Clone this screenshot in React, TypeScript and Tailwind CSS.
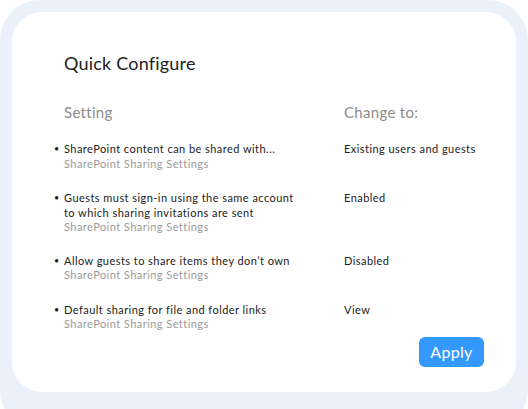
import React from "react";

const rows = [
  { lines: ["SharePoint content can be shared with..."], value: "Existing users and guests", mt: "mt-0" },
  { lines: ["Guests must sign-in using the same account", "to which sharing invitations are sent"], value: "Enabled", mt: "mt-[20px]" },
  { lines: ["Allow guests to share items they don\u2019t own"], value: "Disabled", mt: "mt-[19px]" },
  { lines: ["Default sharing for file and folder links"], value: "View", mt: "mt-[20px]" },
];

export default function App() {
  return (
    <div className="w-[528px] h-[409px] bg-white overflow-hidden" style={{ fontFamily: "Lato, 'Open Sans', sans-serif" }}>
      <div className="w-[528px] h-[430px] bg-[#eaf1fa] rounded-[40px] p-[12px]">
        <div className="w-[504px] h-[380px] bg-white rounded-[30px] pl-[52px] pr-[32px] pt-[39px] flex flex-col">
          <h1 className="text-[18px] leading-[24px] text-[#222222] font-normal tracking-[0.2px]">Quick Configure</h1>
          <div className="grid grid-cols-[280px_1fr] mt-[27px] text-[15px] leading-[20px] text-[#8c8c8c] tracking-[0.3px]">
            <div>Setting</div>
            <div>Change to:</div>
          </div>
          <div className="flex flex-col mt-[20px]">
            {rows.map((r, i) => (
              <div key={i} className={`grid grid-cols-[280px_1fr] text-[11px] leading-[14.5px] tracking-[0.45px] ${r.mt}`}>
                <div className="flex">
                  <span className="w-[10px] -ml-[10px] text-[#222222] text-[9px]">•</span>
                  <div>
                    {r.lines.map((l, j) => (
                      <div key={j} className="text-[#222222]">{l}</div>
                    ))}
                    <div className="text-[#9a9a9a]">SharePoint Sharing Settings</div>
                  </div>
                </div>
                <div className="text-[#222222]">{r.value}</div>
              </div>
            ))}
          </div>
          <div className="flex justify-end mt-[5px]">
            <button className="w-[65px] h-[30px] rounded-[6px] bg-[#3399ff] text-white text-[16px] leading-[30px] tracking-[0.3px]">Apply</button>
          </div>
        </div>
      </div>
    </div>
  );
}
